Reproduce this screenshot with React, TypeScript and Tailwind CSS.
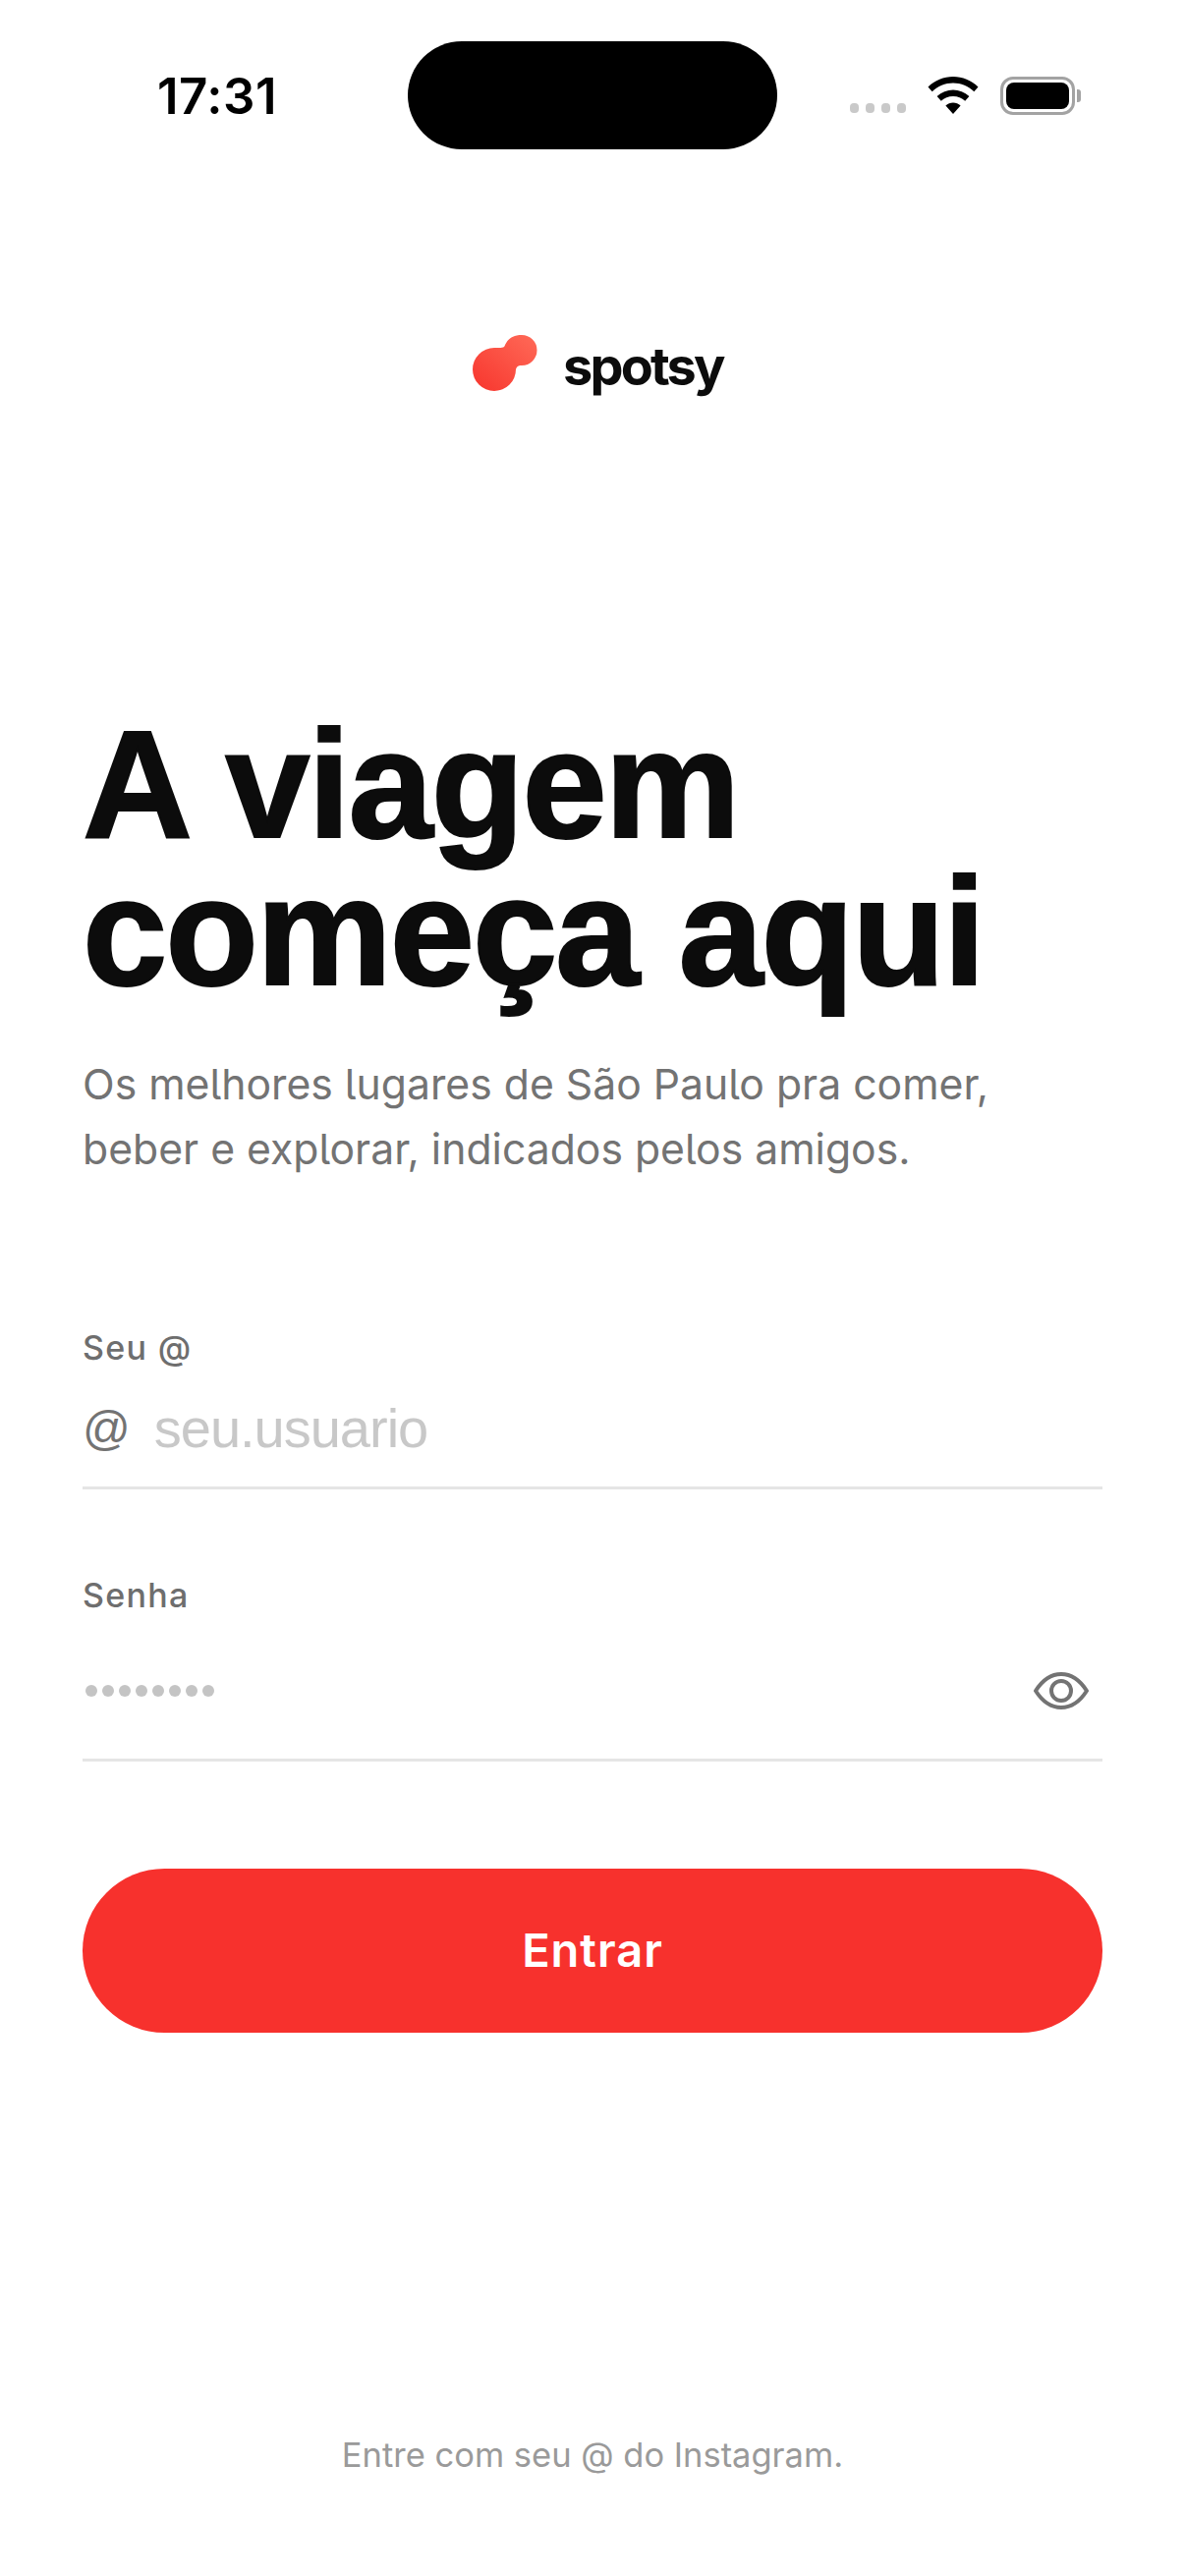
import React from 'react';

const SignalDots = () => (
    <div className="flex gap-[7px]">
        {[0, 1, 2, 3].map((i) => (
            <span key={i} className="w-[9px] h-[10px] rounded-[4px] bg-[#c9c9c9]" />
        ))}
    </div>
);

const WifiIcon = () => (
    <svg width="52" height="38" viewBox="0 0 52 38" fill="#000">
        <path d="M26 0C35.5 0 44.5 3.7 51.5 10.5L47.3 15.2C41.6 9.7 34 6.6 26 6.6S10.4 9.7 4.7 15.2L.5 10.5C7.5 3.7 16.5 0 26 0Z" />
        <path d="M26 13.4C32 13.4 37.8 15.7 42.4 20L38.2 24.7C35 21.8 30.6 20 26 20S17 21.8 13.8 24.7L9.6 20C14.2 15.7 20 13.4 26 13.4Z" />
        <path d="M26 26.5C28.8 26.5 31.5 27.5 33.6 29.4L26 38L18.4 29.4C20.5 27.5 23.2 26.5 26 26.5Z" />
    </svg>
);

const BatteryIcon = () => (
    <div className="flex items-center gap-[2px]">
        <div className="w-[76px] h-[39px] rounded-[13px] border-[3px] border-[#a3a3a3] p-[3px]">
            <div className="w-full h-full rounded-[8px] bg-black" />
        </div>
        <div className="w-[4px] h-[13px] rounded-r-[3px] bg-[#a3a3a3]" />
    </div>
);

const StatusBar = () => (
    <div className="h-[152px] pt-[42px] flex items-start">
        <div className="w-[415px] h-[110px] pl-[160px] flex items-center">
            <span className="text-[51px] leading-none font-semibold text-black tracking-[0.5px]">17:31</span>
        </div>
        <div className="w-[376px] h-[110px] rounded-[56px] bg-black" />
        <div className="ml-[74px] h-[110px] flex items-center gap-[22px]">
            <div className="pt-[26px]">
                <SignalDots />
            </div>
            <WifiIcon />
            <BatteryIcon />
        </div>
    </div>
);

const Logo = () => (
    <div className="mt-[183px] pl-[481px] flex items-center h-[70px]">
        <svg width="66" height="58" viewBox="0 0 66 58">
            <defs>
                <linearGradient id="spotsyBlob" x1="0" y1="1" x2="1" y2="0">
                    <stop offset="0" stopColor="#f7352d" />
                    <stop offset="1" stopColor="#ff6a58" />
                </linearGradient>
            </defs>
            <path
                d="M50 0A15.5 15.5 0 0 1 50 31C47.5 31 45.5 31.5 44.6 33.5C44.2 34.4 44 34.5 44 35A22 22 0 1 1 22 13C26 13 30 13.5 32 12C33.5 10.8 35 0 50 0Z"
                fill="url(#spotsyBlob)"
            />
        </svg>
        <span className="ml-[26px] mt-[5px] text-[54px] leading-none font-bold text-[#0c0c0c] tracking-[-2.8px]">spotsy</span>
    </div>
);

export default function App() {
    return (
        <div className="w-[1206px] h-[2622px] bg-white font-['Inter',sans-serif] flex flex-col">
            <StatusBar />
            <Logo />

            <main className="px-[84px] flex flex-col">
                <h1 className="mt-[319px] font-['Liberation_Sans',sans-serif] text-[155px] leading-[150px] font-bold text-[#0c0c0c] tracking-[-2px] [-webkit-text-stroke:2px_#0c0c0c]">
                    A viagem
                    <br />
                    começa aqui
                </h1>
                <p className="mt-[47px] text-[42.7px] leading-[66px] text-[#737373] [font-feature-settings:'cv05']">
                    Os melhores lugares de São Paulo pra comer,
                    <br />
                    beber e explorar, indicados pelos amigos.
                </p>

                <label className="mt-[147px] text-[34px] leading-[44px] font-medium text-[#6e6e6e] tracking-[1.3px]">Seu @</label>
                <div className="mt-[20px] h-[102px] pb-[20px] flex items-center gap-[24px] border-b-[3px] border-[#e5e5e5]">
                    <span className="font-['Liberation_Sans',sans-serif] text-[48px] leading-none text-[#737373]">@</span>
                    <input
                        placeholder="seu.usuario"
                        className="flex-1 font-['Liberation_Sans',sans-serif] text-[56px] leading-none tracking-[-1px] bg-transparent outline-none placeholder:text-[#c8c8c8]"
                    />
                </div>

                <label className="mt-[86px] text-[34px] leading-[44px] font-medium text-[#6e6e6e] tracking-[1.3px]">Senha</label>
                <div className="mt-[20px] h-[127px] pb-[15px] flex items-center justify-between border-b-[3px] border-[#e5e5e5] pr-[14px]">
                    <div className="flex gap-[5px] pl-[3px]">
                        {[0, 1, 2, 3, 4, 5, 6, 7].map((i) => (
                            <span key={i} className="w-[12px] h-[12px] rounded-full bg-[#c4c4c4]" />
                        ))}
                    </div>
                    <svg width="56" height="38" viewBox="0 0 56 38" fill="none" stroke="#737373" strokeWidth="4">
                        <path d="M2 19C9 8 18 2 28 2S47 8 54 19C47 30 38 36 28 36S9 30 2 19Z" strokeLinejoin="round" />
                        <circle cx="28" cy="19" r="10" />
                    </svg>
                </div>

                <button className="mt-[109px] h-[167px] rounded-[84px] bg-[#f7312d] text-white text-[47px] font-semibold tracking-[1px]">
                    Entrar
                </button>
            </main>

            <footer className="mt-auto mb-[100px] text-center text-[34.5px] leading-[46px] text-[#9a9a9a]">
                Entre com seu @ do Instagram.
            </footer>
        </div>
    );
}
